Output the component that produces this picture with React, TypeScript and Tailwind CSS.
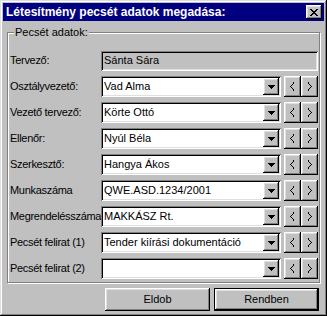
import React from "react";

const raised =
  "shadow-[inset_-1px_-1px_#000,inset_1px_1px_#fff,inset_-2px_-2px_#808080,inset_2px_2px_#dfdfdf]";
const sunken =
  "shadow-[inset_1px_1px_#808080,inset_-1px_-1px_#fff,inset_2px_2px_#000,inset_-2px_-2px_#dfdfdf]";

interface RowProps {
  label: string;
  value: string;
  plain?: boolean;
}

const rows: RowProps[] = [
  { label: "Tervező:", value: "Sánta Sára", plain: true },
  { label: "Osztályvezető:", value: "Vad Alma" },
  { label: "Vezető tervező:", value: "Körte Ottó" },
  { label: "Ellenőr:", value: "Nyúl Béla" },
  { label: "Szerkesztő:", value: "Hangya Ákos" },
  { label: "Munkaszáma", value: "QWE.ASD.1234/2001" },
  { label: "Megrendelésszáma", value: "MAKKÁSZ Rt." },
  { label: "Pecsét felirat (1)", value: "Tender kiírási dokumentáció" },
  { label: "Pecsét felirat (2)", value: "" },
];

const SpinButton: React.FC<{ dir: "left" | "right" }> = ({ dir }) => (
  <div className={`w-[17px] h-[21px] bg-[#c0c0c0] flex items-center justify-center ${raised}`}>
    <svg width="5" height="9" viewBox="0 0 5 9" shapeRendering="crispEdges">
      {dir === "left" ? (
        <polyline points="4,0.5 0.8,4.5 4,8.5" fill="none" stroke="#000" strokeWidth="1" />
      ) : (
        <polyline points="1,0.5 4.2,4.5 1,8.5" fill="none" stroke="#000" strokeWidth="1" />
      )}
    </svg>
  </div>
);

const Row: React.FC<RowProps> = ({ label, value, plain }) => {
  return (
    <div className="flex items-center h-[21px]">
      <div className="w-[91px] shrink-0 whitespace-nowrap tracking-[-0.3px]">{label}</div>
      {plain ? (
        <div className={`flex-1 h-[20px] bg-[#c0c0c0] flex items-center pl-[3px] ${sunken}`}>{value}</div>
      ) : (
        <div className="flex flex-1 items-center gap-[3px]">
          <div className={`w-[180px] h-[21px] bg-white flex items-center p-[2px] ${sunken}`}>
            <div className="flex-1 pl-[1px] whitespace-nowrap overflow-hidden">{value}</div>
            <div className={`w-[16px] h-[17px] bg-[#c0c0c0] flex items-center justify-center ${raised}`}>
              <svg width="7" height="4" viewBox="0 0 7 4" shapeRendering="crispEdges">
                <polygon points="0,0 7,0 3.5,4" fill="#000" />
              </svg>
            </div>
          </div>
          <div className="flex">
            <SpinButton dir="left" />
            <SpinButton dir="right" />
          </div>
        </div>
      )}
    </div>
  );
};

export default function App() {
  return (
    <div
      className={`w-[327px] h-[316px] bg-[#c0c0c0] p-[3px] flex flex-col text-[11px] leading-[13px] text-black font-['Liberation_Sans',Arial,sans-serif] shadow-[inset_-1px_-1px_#000,inset_1px_1px_#dfdfdf,inset_-2px_-2px_#808080,inset_2px_2px_#fff]`}
    >
      <div className="h-[18px] bg-[#000080] flex items-center justify-between pl-[3px] pr-[2px]">
        <span className="text-white font-bold text-[12px] leading-[18px] whitespace-nowrap">
          Létesítmény pecsét adatok megadása:
        </span>
        <div className={`w-[16px] h-[14px] bg-[#c0c0c0] flex items-center justify-center ${raised}`}>
          <svg width="8" height="7" viewBox="0 0 8 7" shapeRendering="crispEdges">
            <path d="M0 0h2v1h-2zM6 0h2v1h-2zM1 1h2v1h-2zM5 1h2v1h-2zM2 2h4v1h-4zM3 3h2v1h-2zM2 4h4v1h-4zM1 5h2v1h-2zM5 5h2v1h-2zM0 6h2v1h-2zM6 6h2v1h-2z" fill="#000" />
          </svg>
        </div>
      </div>

      <div className="relative mt-[11px] mx-[4px] border border-[#808080] shadow-[1px_1px_0_#fff,inset_1px_1px_0_#fff] pt-[17px] pb-[3px] pl-[2px] pr-[1px] flex flex-col gap-[5px]">
        <div className="absolute left-[6px] top-[-7px] px-[1px] bg-[#c0c0c0] leading-[13px]">Pecsét adatok:</div>
        {rows.map((r) => (
          <Row key={r.label} {...r} />
        ))}
      </div>

      <div className="flex justify-end gap-[4px] pr-[5px] mt-[5px]">
        <div className={`w-[105px] h-[23px] bg-[#c0c0c0] flex items-center justify-center ${raised}`}>Eldob</div>
        <div className="w-[105px] h-[23px] border border-black">
          <div className={`w-full h-full bg-[#c0c0c0] flex items-center justify-center ${raised}`}>Rendben</div>
        </div>
      </div>
    </div>
  );
}
